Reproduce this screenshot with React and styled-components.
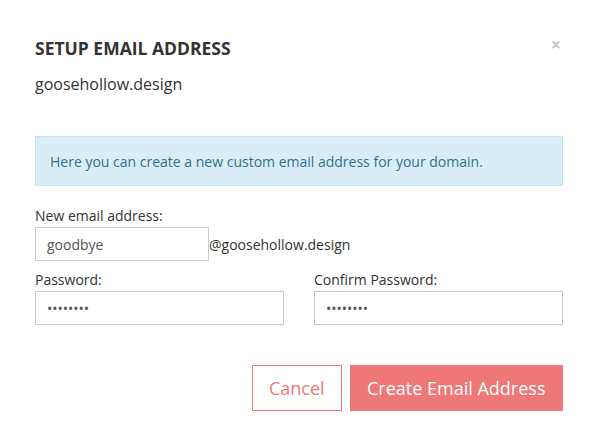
import React from "react";
import styled, { createGlobalStyle } from "styled-components";

const GlobalStyle = createGlobalStyle`
    html, body {
        margin: 0;
        padding: 0;
        background: #ffffff;
    }
    body {
        font-family: 'Open Sans', 'Liberation Sans', sans-serif;
        color: #333333;
    }
`

export default function App() {
    return (
        <>
            <GlobalStyle />
            <Modal>
                <Header>
                    <div>
                        <Title>SETUP EMAIL ADDRESS</Title>
                        <Domain>goosehollow.design</Domain>
                    </div>
                    <Close>×</Close>
                </Header>
                <Info>Here you can create a new custom email address for your domain.</Info>
                <Field>
                    <Label>New email address:</Label>
                    <EmailRow>
                        <Input width="174px" defaultValue="goodbye" />
                        <Suffix>@goosehollow.design</Suffix>
                    </EmailRow>
                </Field>
                <PasswordGrid>
                    <Field>
                        <Label>Password:</Label>
                        <Input type="password" defaultValue="12345678" />
                    </Field>
                    <Field>
                        <Label>Confirm Password:</Label>
                        <Input type="password" defaultValue="12345678" />
                    </Field>
                </PasswordGrid>
                <Actions>
                    <Button>Cancel</Button>
                    <Button primary>Create Email Address</Button>
                </Actions>
            </Modal>
        </>
    )
}

const Modal = styled.div`
    width: 598px;
    height: 446px;
    box-sizing: border-box;
    padding: 35px 35px 0 35px;
`
const Header = styled.div`
    display: flex;
    justify-content: space-between;
    align-items: flex-start;
`
const Title = styled.h1`
    margin: 0;
    font-size: 17.5px;
    font-weight: 700;
    line-height: 26px;
    color: #333333;
`
const Domain = styled.p`
    margin: 12px 0 0 0;
    font-size: 16px;
    line-height: 22px;
    color: #333333;
`
const Close = styled.span`
    font-size: 18px;
    font-weight: 700;
    line-height: 18px;
    margin-top: 0;
    margin-right: 2px;
    color: #c8c8c8;
`
const Info = styled.div`
    margin-top: 41px;
    height: 50px;
    box-sizing: border-box;
    display: flex;
    align-items: center;
    padding: 0 14px;
    background: #d9edf7;
    border: 1px solid #bce8f1;
    color: #31708f;
    font-size: 14px;
`
const Field = styled.div`
    display: flex;
    flex-direction: column;
    margin-top: 20px;
`
const Label = styled.label`
    font-size: 14px;
    line-height: 20px;
    color: #333333;
    margin-bottom: 1px;
`
const EmailRow = styled.div`
    display: flex;
    align-items: center;
`
const Input = styled.input`
    width: ${p => p.width || "100%"};
    height: 34px;
    box-sizing: border-box;
    border: 1px solid #cccccc;
    border-radius: 0;
    padding: 0 11px;
    font-family: 'Open Sans', 'Liberation Sans', sans-serif;
    font-size: 14px;
    color: #555555;
    outline: none;
`
const Suffix = styled.span`
    font-size: 14px;
    color: #333333;
`
const PasswordGrid = styled.div`
    display: grid;
    grid-template-columns: 249px 249px;
    justify-content: space-between;
    margin-top: -11px;
`
const Actions = styled.div`
    display: flex;
    justify-content: flex-end;
    gap: 8px;
    margin-top: 40px;
`
const Button = styled.button`
    height: 46px;
    box-sizing: border-box;
    padding: 0 ${p => p.primary ? "16.5px" : "16px"};
    border: 1px solid #ee7777;
    background: ${p => p.primary ? "#ee7777" : "#ffffff"};
    color: ${p => p.primary ? "#ffffff" : "#ee7777"};
    font-family: 'Open Sans', 'Liberation Sans', sans-serif;
    font-size: 18px;
    cursor: pointer;
`
